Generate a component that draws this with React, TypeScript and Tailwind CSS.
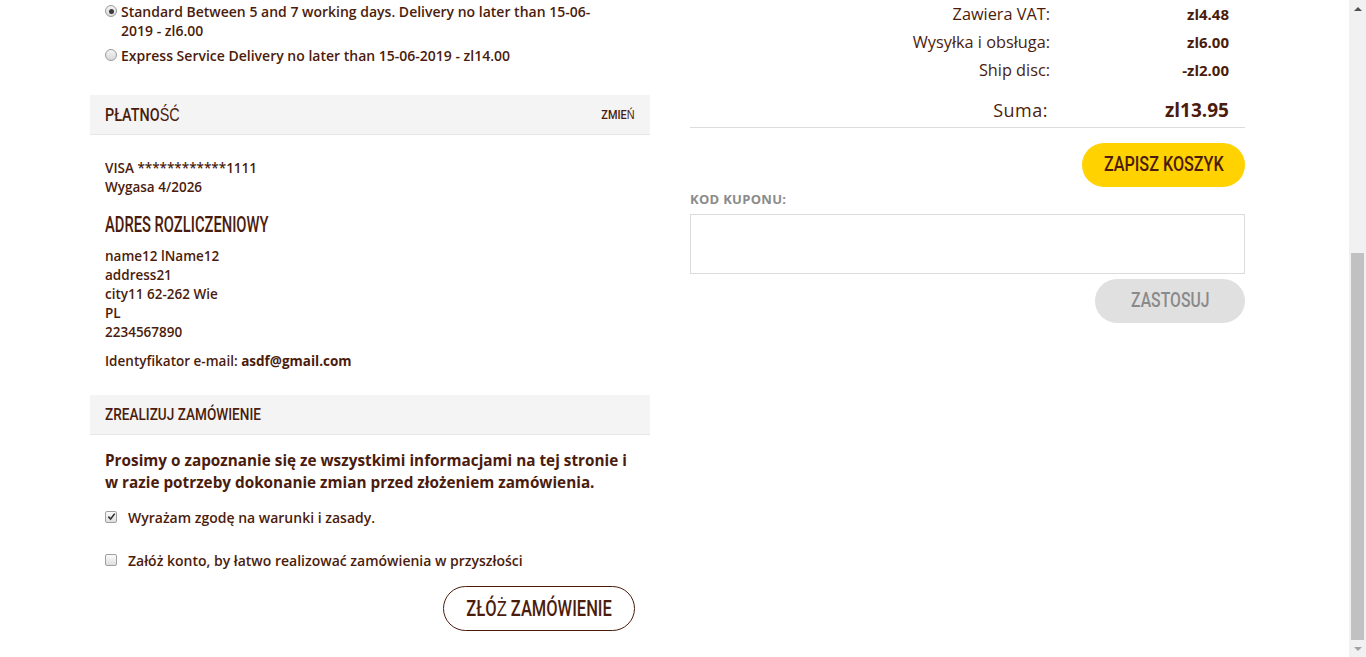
import React from "react";

const brown = "text-[#4b1c0c]";
const cond = "font-[Roboto,'Liberation_Sans',sans-serif] font-medium inline-block whitespace-nowrap";
const body = "font-['Open_Sans',Roboto,sans-serif]";
const thin = "font-['Liberation_Sans',sans-serif] font-normal";

function Radio({ checked }: { checked?: boolean }) {
    return (
        <span className="mt-[3px] mr-[4px] inline-flex h-[12px] w-[12px] shrink-0 items-center justify-center rounded-full border border-[#9a9a9a] bg-gradient-to-b from-[#f4f4f4] to-[#d9d9d9]">
            {checked && <span className="h-[5px] w-[5px] rounded-full bg-[#3c3c3c]" />}
        </span>
    );
}

function Check({ checked }: { checked?: boolean }) {
    return (
        <span className="inline-flex h-[12px] w-[12px] shrink-0 items-center justify-center rounded-[2px] border border-[#a0a0a0] bg-gradient-to-b from-[#fbfbfb] to-[#dedede]">
            {checked && (
                <svg width="9" height="9" viewBox="0 0 10 10">
                    <path d="M1.5 5.2 L4 7.8 L8.6 1.8" fill="none" stroke="#333" strokeWidth="1.8" />
                </svg>
            )}
        </span>
    );
}

function SectionHeader({ children, action }: { children: React.ReactNode; action?: React.ReactNode }) {
    return (
        <div className="flex h-[40px] items-center justify-between border-b border-[#e6e6e6] bg-[#f4f4f4] px-[15px]">
            {children}
            {action}
        </div>
    );
}

const address = ["name12 lName12", "address21", "city11 62-262 Wie", "PL", "2234567890"];

const totals = [
    { label: "Zawiera VAT:", value: "zl4.48" },
    { label: "Wysyłka i obsługa:", value: "zl6.00" },
    { label: "Ship disc:", value: "-zl2.00" },
];

function Scrollbar() {
    return (
        <div className="flex h-[657px] w-[17px] shrink-0 flex-col bg-[#f1f1f1]">
            <div className="flex h-[17px] items-center justify-center">
                <span className="h-0 w-0 border-x-[4px] border-b-[4px] border-x-transparent border-b-[#505050]" />
            </div>
            <div className="h-[236px]" />
            <div className="mx-[2px] h-[387px] bg-[#c1c1c1]" />
            <div className="flex flex-1 items-center justify-center">
                <span className="h-0 w-0 border-x-[4px] border-t-[4px] border-x-transparent border-t-[#a3a3a3]" />
            </div>
        </div>
    );
}

export default function App() {
    return (
        <div className={`flex h-[657px] w-[1366px] overflow-hidden bg-white ${body} ${brown}`}>
            <div className="flex flex-1 gap-[40px] pl-[90px]">
                {/* left column */}
                <div className="w-[560px] pt-[2px]">
                    <div className="pl-[15px] pr-[40px] text-[14px] font-semibold leading-[19px]">
                        <div className="flex">
                            <Radio checked />
                            <span>Standard Between 5 and 7 working days. Delivery no later than 15-06-2019 - zl6.00</span>
                        </div>
                        <div className="mt-[6px] flex">
                            <Radio />
                            <span>Express Service Delivery no later than 15-06-2019 - zl14.00</span>
                        </div>
                    </div>

                    <div className="mt-[30px]">
                        <SectionHeader
                            action={
                                <span className={`${cond} origin-right scale-x-[0.84] text-[13px]`}>
                                    ZMIE<span className={thin}>Ń</span>
                                </span>
                            }
                        >
                            <h3 className={`${cond} origin-left scale-x-[0.8] text-[18px]`}>
                                PŁATNO<span className={thin}>ŚĆ</span>
                            </h3>
                        </SectionHeader>
                    </div>

                    <div className="px-[15px] pt-[24px] text-[13.5px] font-semibold leading-[19px]">
                        <p>VISA ************1111</p>
                        <p>Wygasa 4/2026</p>
                        <h3 className={`${cond} mt-[14px] origin-left scale-x-[0.67] text-[22px] leading-[28px]`}>
                            ADRES ROZLICZENIOWY
                        </h3>
                        <div className="mt-[8px]">
                            {address.map((line) => (
                                <p key={line}>{line}</p>
                            ))}
                        </div>
                        <p className="mt-[10px]">
                            Identyfikator e-mail: <span className="font-bold">asdf@gmail.com</span>
                        </p>
                    </div>

                    <div className="mt-[24px]">
                        <SectionHeader>
                            <h3 className={`${cond} origin-left scale-x-[0.8] text-[17px]`}>ZREALIZUJ ZAMÓWIENIE</h3>
                        </SectionHeader>
                    </div>

                    <div className="px-[15px] pt-[14px]">
                        <p className="text-[15.3px] font-bold leading-[22px]">
                            Prosimy o zapoznanie się ze wszystkimi informacjami na tej stronie i w razie potrzeby dokonanie zmian przed złożeniem zamówienia.
                        </p>
                        <label className="mt-[14px] flex h-[19px] items-center gap-[11px] text-[14px] font-semibold">
                            <Check checked />
                            <span className="mt-[2px]">Wyrażam zgodę na warunki i zasady.</span>
                        </label>
                        <label className="mt-[24px] flex h-[19px] items-center gap-[11px] text-[14px] font-semibold">
                            <Check />
                            <span className="mt-[1px]">Załóż konto, by łatwo realizować zamówienia w przyszłości</span>
                        </label>
                        <div className="mt-[17px] flex justify-end">
                            <button className="flex h-[45px] w-[192px] items-center justify-center rounded-full border border-[#4b1c0c]">
                                <span className={`${cond} scale-x-[0.75] text-[22px] ${brown}`}>
                                    ZŁÓ<span className={thin}>Ż</span> ZAMÓWIENIE
                                </span>
                            </button>
                        </div>
                    </div>
                </div>

                {/* right column */}
                <div className="w-[555px]">
                    {totals.map((t) => (
                        <div key={t.label} className="flex h-[28px] items-center">
                            <span className="w-[360px] text-right text-[16.3px] font-medium">{t.label}</span>
                            <span className="flex-1 pr-[16px] text-right text-[15px] font-bold">{t.value}</span>
                        </div>
                    ))}
                    <div className="mt-[12px] border-b border-[#dcdcdc] pb-[3px]">
                        <div className="flex h-[28px] items-center">
                            <span className="w-[358px] text-right text-[18px] font-medium tracking-[0.5px]">Suma:</span>
                            <span className="flex-1 pr-[16px] text-right text-[19px] font-bold">zl13.95</span>
                        </div>
                    </div>
                    <div className="mt-[15px] flex justify-end">
                        <button className="flex h-[44px] w-[163px] items-center justify-center rounded-full bg-[#ffd200]">
                            <span className={`${cond} scale-x-[0.77] text-[21px] ${brown}`}>ZAPISZ KOSZYK</span>
                        </button>
                    </div>
                    <label className="mt-[4px] block text-[13px] font-bold leading-[16px] tracking-[0.3px] text-[#8b8b8b]">
                        KOD KUPONU:
                    </label>
                    <input type="text" className="mt-[7px] block h-[60px] w-full border border-[#dcdcdc] bg-white px-3 outline-none" />
                    <div className="mt-[5px] flex justify-end">
                        <button className="flex h-[44px] w-[150px] items-center justify-center rounded-full bg-[#e0e0e0]">
                            <span className={`${cond} scale-x-[0.75] text-[21px] text-[#8a8a8a]`}>ZASTOSUJ</span>
                        </button>
                    </div>
                </div>
            </div>
            <Scrollbar />
        </div>
    );
}
